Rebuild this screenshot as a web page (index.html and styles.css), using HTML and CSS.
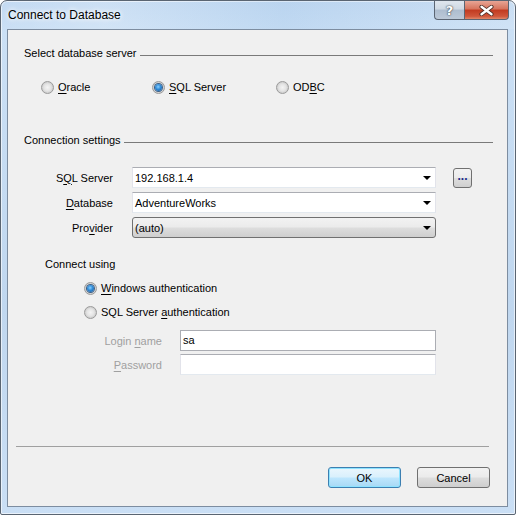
FILE: index.html
```html
<!DOCTYPE html>
<html lang="en">
<head>
    <meta charset="UTF-8">
    <title>Connect to Database</title>
    <link rel="stylesheet" href="styles.css">
</head>
<body>
    <div class="window">
        <!-- Title bar -->
        <div class="titlebar">
            <div class="title">Connect to Database</div>
            <div class="caption-buttons">
                <div class="cap-btn help">?</div>
                <div class="cap-btn close">
                    <svg width="15" height="11" viewBox="0 0 15 11">
                        <path d="M2.5 1.8 L12.5 9.2 M12.5 1.8 L2.5 9.2" stroke="#4a2a22" stroke-width="4" stroke-linecap="round"/>
                        <path d="M2.5 1.8 L12.5 9.2 M12.5 1.8 L2.5 9.2" stroke="#fff" stroke-width="2.4" stroke-linecap="round"/>
                    </svg>
                </div>
            </div>
        </div>

        <!-- Client area -->
        <div class="client">
            <div class="group-title first"><span>Select database server</span></div>
            <div class="server-types">
                <label class="radio"><span class="dot"></span><span><u>O</u>racle</span></label>
                <label class="radio checked"><span class="dot"></span><span><u>S</u>QL Server</span></label>
                <label class="radio"><span class="dot"></span><span>OD<u>B</u>C</span></label>
            </div>

            <div class="group-title second"><span>Connection settings</span></div>
            <div class="fields">
                <div class="field-label">S<u>Q</u>L Server</div>
                <div class="combo"><span>192.168.1.4</span><span class="arrow"></span></div>
                <div class="browse">...</div>

                <div class="field-label"><u>D</u>atabase</div>
                <div class="combo"><span>AdventureWorks</span><span class="arrow"></span></div>
                <div></div>

                <div class="field-label">Pro<u>v</u>ider</div>
                <div class="combo list"><span>(auto)</span><span class="arrow"></span></div>
                <div></div>
            </div>

            <div class="connect-title">Connect using</div>
            <div class="auth">
                <label class="radio checked"><span class="dot"></span><span><u>W</u>indows authentication</span></label>
                <label class="radio"><span class="dot"></span><span>SQL Server <u>a</u>uthentication</span></label>
            </div>
            <div class="login">
                <div class="field-label disabled">Login <u>n</u>ame</div>
                <div class="textbox focus">sa</div>
                <div class="field-label disabled"><u>P</u>assword</div>
                <div class="textbox"></div>
            </div>

            <div class="separator"></div>
            <div class="buttons">
                <div class="button default">OK</div>
                <div class="button">Cancel</div>
            </div>
        </div>
    </div>
</body>
</html>
```

FILE: styles.css
```css
/* General */
* {
    margin: 0;
    padding: 0;
    box-sizing: border-box;
}
body {
    font-family: "Liberation Sans", Arial, sans-serif;
    font-size: 11px;
    color: #000;
    background: #fff;
}
u {
    text-decoration: underline;
    text-underline-offset: 2px;
}

/* Window frame */
.window {
    width: 516px;
    height: 515px;
    display: flex;
    flex-direction: column;
    border: 1px solid #5a6572;
    border-radius: 7px 7px 2px 2px;
    background: linear-gradient(180deg, #c3daf2 0%, #cbe0f5 6%, #c0d7ef 60%, #cadff5 100%);
    box-shadow: inset 0 0 0 1px rgba(255, 255, 255, 0.6);
}

/* Title bar */
.titlebar {
    height: 28px;
    display: flex;
    justify-content: space-between;
    background: linear-gradient(90deg, rgba(255,255,255,0) 0%, rgba(255,255,255,0.15) 20%, rgba(120,170,220,0.12) 55%, rgba(255,255,255,0.1) 100%);
}
.title {
    padding: 7px 0 0 7px;
    font-size: 12px;
    color: #000;
    text-shadow: 0 0 6px #fff, 0 0 4px #fff;
}
.caption-buttons {
    display: flex;
    margin-right: 6px;
    height: 19px;
}
.cap-btn {
    display: flex;
    align-items: center;
    justify-content: center;
    border: 1px solid #5b6573;
    border-top: none;
}
.help {
    width: 30px;
    border-radius: 0 0 0 4px;
    border-right: none;
    background: linear-gradient(180deg, #dfe6ee 0%, #cfd9e4 45%, #aebdcf 50%, #bcc9d8 100%);
    font-family: "DejaVu Sans", sans-serif;
    font-size: 13px;
    font-weight: bold;
    color: #fff;
    text-shadow: 0 0 2px #38404a, 0 0 1px #38404a;
}
.close {
    width: 45px;
    border-radius: 0 0 4px 0;
    background: linear-gradient(180deg, #e8a595 0%, #d6735c 45%, #c13a20 50%, #d0573b 85%, #e0886a 100%);
}

/* Client area */
.client {
    flex: 1;
    margin: 0 7px 7px 6px;
    background: #f0f0f0;
    border: 1px solid #7d8da0;
    padding: 0 14px 0 16px;
    display: flex;
    flex-direction: column;
}
.group-title {
    display: flex;
    align-items: center;
    height: 16px;
}
.group-title::after {
    content: "";
    flex: 1;
    height: 1px;
    margin: 5px 0 0 3px;
    background: #7a7a7a;
}
.group-title.first {
    margin-top: 15px;
}
.group-title.second {
    margin-top: 37px;
}

/* Radios */
.radio {
    display: flex;
    align-items: center;
    height: 16px;
    white-space: nowrap;
}
.dot {
    width: 13px;
    height: 13px;
    border-radius: 50%;
    margin-right: 4px;
    border: 1px solid #9a9a9a;
    background: radial-gradient(circle at 50% 50%, #f4f4f4 0%, #e4e4e4 45%, #cfcfcf 70%, #f8f8f8 100%);
    display: flex;
    align-items: center;
    justify-content: center;
}
.radio.checked .dot::after {
    content: "";
    width: 7px;
    height: 7px;
    border-radius: 50%;
    background: radial-gradient(circle at 45% 40%, #8ad0ff 0%, #2f8bd8 45%, #17508f 100%);
    box-shadow: 0 0 0 1px #3b5f86;
}
.server-types {
    display: flex;
    margin-top: 18px;
    padding-left: 17px;
}
.server-types .radio:nth-child(1) {
    width: 111px;
}
.server-types .radio:nth-child(2) {
    width: 124px;
}

/* Connection fields */
.fields {
    display: grid;
    grid-template-columns: 91px 304px 19px;
    column-gap: 17px;
    row-gap: 4px;
    margin-top: 19px;
    align-items: center;
}
.fields .field-label {
    justify-self: end;
    padding-right: 2px;
}
.combo {
    height: 21px;
    display: flex;
    align-items: center;
    justify-content: space-between;
    padding: 0 4px 0 2px;
    background: #fff;
    border: 1px solid #e2e3ea;
    border-top-color: #abadb3;
    border-bottom-color: #e3e9ef;
}
.combo:first-of-type {
    height: 20px;
}
.combo.list {
    border: 1px solid #707070;
    border-radius: 3px;
    background: linear-gradient(180deg, #f2f2f2 0%, #ebebeb 48%, #dddddd 52%, #cfcfcf 100%);
}
.arrow {
    width: 0;
    height: 0;
    border-left: 4px solid transparent;
    border-right: 4px solid transparent;
    border-top: 4px solid #000;
}
.browse {
    height: 20px;
    border: 1px solid #707070;
    border-radius: 3px;
    background: linear-gradient(180deg, #f2f2f2 0%, #ebebeb 48%, #dddddd 52%, #cfcfcf 100%);
    font-size: 12px;
    font-weight: bold;
    color: #1a2a8a;
    text-align: center;
    line-height: 14px;
}

/* Authentication */
.connect-title {
    margin-top: 20px;
    padding-left: 21px;
    height: 16px;
}
.auth {
    display: flex;
    flex-direction: column;
    gap: 8px;
    margin-top: 6px;
    padding-left: 60px;
}
.login {
    display: grid;
    grid-template-columns: 138px 256px;
    column-gap: 18px;
    row-gap: 3px;
    margin-top: 10px;
    align-items: center;
}
.login .field-label {
    justify-self: end;
}
.field-label.disabled {
    color: #a0a0a0;
}
.textbox {
    height: 21px;
    padding: 3px 2px;
    background: #fff;
    border: 1px solid #e2e3ea;
    border-top-color: #abadb3;
    border-bottom-color: #e3e9ef;
}
.textbox.focus {
    border-color: #abadb3;
}

/* Bottom buttons */
.separator {
    margin: auto 4px 0 -8px;
    height: 1px;
    background: #a0a0a0;
}
.buttons {
    display: flex;
    justify-content: flex-end;
    gap: 16px;
    margin: 20px 3px 18px 0;
}
.button {
    width: 73px;
    height: 21px;
    display: flex;
    align-items: center;
    justify-content: center;
    border: 1px solid #707070;
    border-radius: 3px;
    background: linear-gradient(180deg, #f2f2f2 0%, #ebebeb 48%, #dddddd 52%, #cfcfcf 100%);
}
.button.default {
    border-color: #3c7fb1;
    background: linear-gradient(180deg, #eaf6fd 0%, #d9f0fc 48%, #bee6fd 52%, #a7d9f5 100%);
    box-shadow: inset 0 0 0 1px #8ee3ff;
}
```
